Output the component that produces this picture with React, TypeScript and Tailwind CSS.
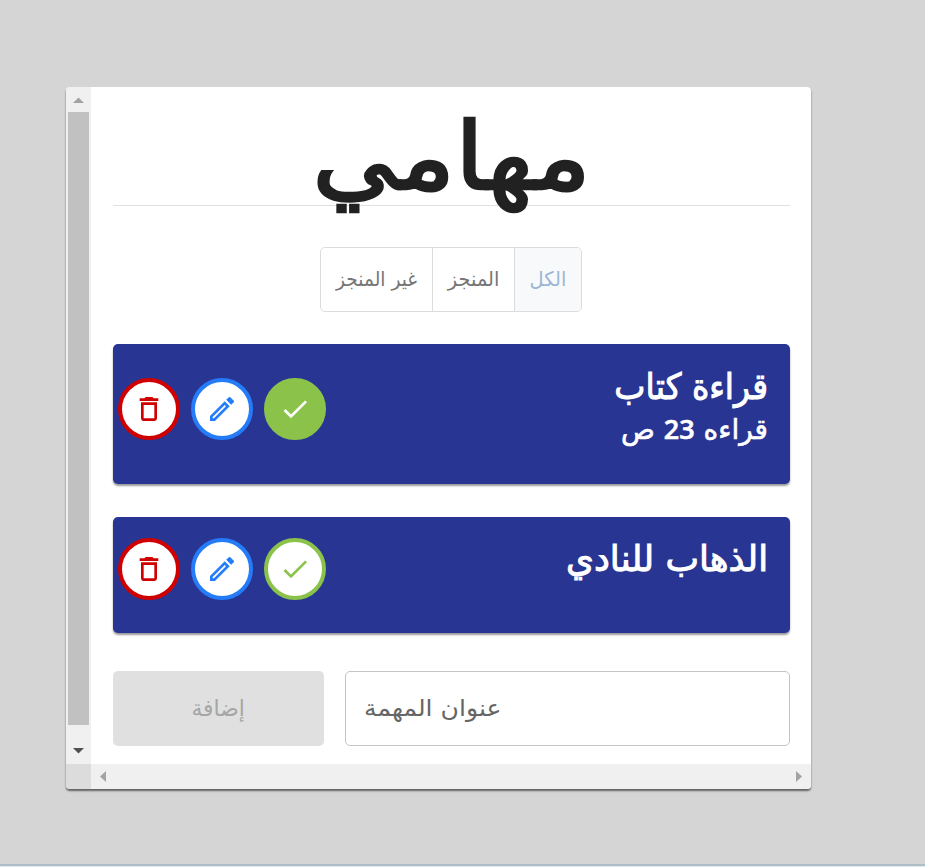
import type { ReactNode } from "react";

const PATHS = {
  trash:
    "M6 19c0 1.1.9 2 2 2h8c1.1 0 2-.9 2-2V7H6v12zM8 9h8v10H8V9zm7.5-5-1-1h-5l-1 1H5v2h14V4z",
  pencil:
    "m14.06 9.02.92.92L5.92 19H5v-.92l9.06-9.06M17.66 3c-.25 0-.51.1-.7.29l-1.83 1.83 3.75 3.75 1.83-1.83c.39-.39.39-1.02 0-1.41l-2.34-2.34c-.2-.2-.45-.29-.71-.29zm-3.6 3.19L3 17.25V21h3.75L17.81 9.94l-3.75-3.75z",
  check: "M9 16.17 4.83 12l-1.42 1.41L9 19 21 7l-1.41-1.41z",
};

function RoundButton({ icon, tone }: { icon: keyof typeof PATHS; tone: string }) {
  return (
    <button className={`flex size-[62px] shrink-0 items-center justify-center rounded-full border-4 ${tone}`}>
      <svg viewBox="0 0 24 24" className="size-[32px]" fill="currentColor">
        <path d={PATHS[icon]} />
      </svg>
    </button>
  );
}

function Task({ done, className, children }: { done: boolean; className: string; children: ReactNode }) {
  return (
    <article
      className={`flex shrink-0 items-start justify-between rounded-[5px] bg-[#283593] pr-[22px] pl-[5px] text-white shadow-[0_2px_2px_rgba(0,0,0,0.4)] ${className}`}
    >
      <div className="flex gap-[11px]">
        <RoundButton icon="trash" tone="border-[#d00000] bg-white text-[#d00000]" />
        <RoundButton icon="pencil" tone="border-[#247cf9] bg-white text-[#247cf9]" />
        <RoundButton
          icon="check"
          tone={done ? "border-[#8bc34a] bg-[#8bc34a] text-white" : "border-[#8bc34a] bg-white text-[#8bc34a]"}
        />
      </div>
      {children}
    </article>
  );
}

export default function App() {
  return (
    <div className="flex h-[867px] w-[925px] flex-col bg-[#d5d5d5] font-['DejaVu_Sans',sans-serif]">
      <main className="mt-[87px] ml-[66px] flex h-[702px] w-[745px] flex-col overflow-hidden rounded-[4px] bg-white shadow-[0_2px_2px_rgba(0,0,0,0.55)]">
        <div className="flex h-[677px]">
          <div className="flex w-[25px] flex-col items-center bg-[#f0f0f0]">
            <svg viewBox="0 0 25 25" className="size-[25px] shrink-0">
              <path d="M7 16 12.5 10.5 18 16Z" fill="#a3a3a3" />
            </svg>
            <div className="h-[613px] w-[21px] shrink-0 bg-[#c1c1c1]" />
            <svg viewBox="0 0 25 25" className="mt-[14px] size-[25px] shrink-0">
              <path d="M7 9 18 9 12.5 14.5Z" fill="#505050" />
            </svg>
          </div>
          <div className="flex flex-1 flex-col pr-[21px] pl-[22px]">
            <h1 dir="rtl" className="flex h-[119px] items-center justify-center border-b border-[#e0e0e0] pt-[20px] text-[94px] leading-[119px] whitespace-nowrap text-[#212121]">
              <span className="inline-block scale-x-[1.11] [-webkit-text-stroke:2.5px_#212121]">مهامي</span>
            </h1>
            <div dir="rtl" className="mt-[41px] mr-[2px] flex h-[65px] w-[262px] self-center overflow-hidden rounded-[5px] border border-[#dcdcdc] text-[20px] text-[#757575]">
              <button className="w-[66px] bg-[#f7f9fb] pb-[2px] pl-px text-[#9db6d3]"><span className="inline-block scale-x-[0.97] whitespace-nowrap">الكل</span></button>
              <button className="w-[82px] border-r border-[#dcdcdc] pb-[2px] pl-[2px]"><span className="inline-block scale-x-[0.97] whitespace-nowrap">المنجز</span></button>
              <button className="flex-1 border-r border-[#dcdcdc] pb-[2px] pl-[2px]"><span className="inline-block scale-x-[0.93] whitespace-nowrap">غير المنجز</span></button>
            </div>
            <Task done className="mt-[32px] h-[140px] pt-[34px]">
              <div dir="rtl" className="-mt-[12px] flex flex-col items-start whitespace-nowrap">
                <h2 className="origin-right scale-x-[0.92] text-[36px] leading-[42px] [-webkit-text-stroke:1px_#fff]">قراءة كتاب</h2>
                <p className="text-[28px] leading-[42px] [-webkit-text-stroke:0.6px_#fff]">قراءه <span className="font-['Open_Sans'] text-[27px] font-semibold">23</span> ص</p>
              </div>
            </Task>
            <Task done={false} className="mt-[33px] h-[116px] pt-[21px]">
              <h2 dir="rtl" className="origin-right scale-x-[0.99] text-[36px] leading-[42px] whitespace-nowrap [-webkit-text-stroke:1px_#fff]">الذهاب للنادي</h2>
            </Task>
            <div className="mt-[38px] flex h-[75px] gap-[21px]">
              <button className="w-[211px] rounded-[5px] bg-[#e0e0e0] text-[23px] text-[#a6a6a6]"><span className="inline-block scale-x-[0.95]">إضافة</span></button>
              <div className="flex flex-1 items-center rounded-[5px] border border-[#c4c4c4] pl-[18px] text-[23px] text-[#666666]">
                <span className="inline-block origin-left scale-x-[1.09] whitespace-nowrap">عنوان المهمة</span>
              </div>
            </div>
          </div>
        </div>
        <div className="flex h-[25px]">
          <div className="w-[25px] bg-[#dcdcdc]" />
          <div className="flex flex-1 justify-between bg-[#f0f0f0]">
            <svg viewBox="0 0 25 25" className="size-[25px]">
              <path d="M15 7 15 18 9 12.5Z" fill="#a3a3a3" />
            </svg>
            <svg viewBox="0 0 25 25" className="size-[25px]">
              <path d="M10 7 16 12.5 10 18Z" fill="#a3a3a3" />
            </svg>
          </div>
        </div>
      </main>
      <div className="mt-[75px] h-[2px] bg-[#afbec6]" />
      <div className="h-px bg-[#e2edf2]" />
    </div>
  );
}
